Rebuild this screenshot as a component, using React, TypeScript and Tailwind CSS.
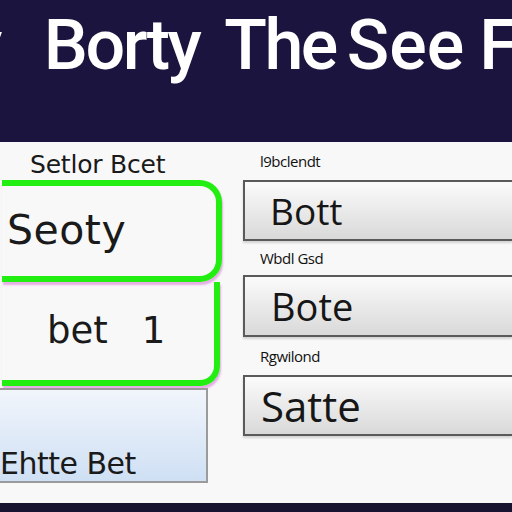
import React from 'react';

const dv = { fontFamily: '"DejaVu Sans", sans-serif' };

const fields = [
  { label: 'l9bclendt', value: 'Bott', h: 'h-[38px]', box: 'h-[61px] pl-[25px] text-[37px]' },
  { label: 'Wbdl Gsd', value: 'Bote', h: 'h-[34px]', box: 'h-[62px] pl-[26px] text-[38px]' },
  { label: 'Rgwilond', value: 'Satte', h: 'h-[38px]', box: 'h-[61px] pl-[16px] text-[42px]' },
];

export default function App() {
  return (
    <div className="w-[512px] h-[512px] flex flex-col overflow-hidden bg-[#f8f8f8] font-['Open_Sans',sans-serif]">
      <header className="h-[142px] shrink-0 bg-[#1b143e] overflow-hidden">
        <h1 className="flex ml-[-32px] pt-[10px] whitespace-nowrap font-['Roboto',sans-serif] text-[70px] leading-none font-medium text-white tracking-[-2.5px]">
          <span>y</span>
          <span className="ml-[44px]">Borty</span>
          <span className="ml-[25px]">The</span>
          <span className="ml-[11px] tracking-[0px]">See</span>
          <span className="ml-[15px]">Ft</span>
        </h1>
      </header>

      <main className="flex-1 flex">
        {/* left column */}
        <section className="w-[222px] shrink-0 flex flex-col" style={dv}>
          <div className="h-[38px] flex items-end pb-[3px] pl-[30px] text-[25px] leading-none text-[#1a1a1a] tracking-[-0.2px]">
            Setlor Bcet
          </div>
          <div className="ml-[2px] h-[102px] flex items-center pl-[5px] border-y-[6px] border-r-[6px] border-[#22ee11] rounded-r-[22px] shadow-[1px_3px_2px_rgba(214,110,214,0.55)]">
            <span className="text-[41px] text-[#1a1a1a] tracking-[0.5px]">Seoty</span>
          </div>
          <div className="ml-[2px] mr-[2px] h-[104px] flex items-center gap-[34px] pl-[45px] border-r-[6px] border-b-[6px] border-[#22ee11] rounded-br-[20px] shadow-[1px_3px_2px_rgba(214,110,214,0.55)]">
            <span className="text-[37px] text-[#1a1a1a]">bet</span>
            <span className="text-[37px] text-[#1a1a1a]">1</span>
          </div>
          <div className="mt-[2px] w-[208px] h-[95px] flex items-end pb-[2px] border-2 border-[#9b9b9b] border-l-0 bg-gradient-to-b from-[#f1f5fb] to-[#cfe0f4]">
            <span className="text-[30px] leading-none text-[#1a1a1a] tracking-[-0.5px]">Ehtte Bet</span>
          </div>
        </section>

        {/* right column */}
        <section className="flex-1 flex flex-col pl-[21px]">
          {fields.map((f) => (
            <div key={f.label} className="flex flex-col">
              <div className={`${f.h} flex items-center pl-[17px] text-[15px] font-medium text-[#111] tracking-[-0.5px]`}>
                {f.label}
              </div>
              <div
                className={`${f.box} flex items-center border-2 border-r-0 border-[#5a5a5a] bg-gradient-to-b from-[#fbfbfb] to-[#d9d9d9] text-[#161616] font-medium shadow-[0_2px_2px_rgba(0,0,0,0.15)]`}
              >
                {f.value}
              </div>
            </div>
          ))}
        </section>
      </main>

      <footer className="h-[9px] shrink-0 bg-[#181330]" />
    </div>
  );
}
